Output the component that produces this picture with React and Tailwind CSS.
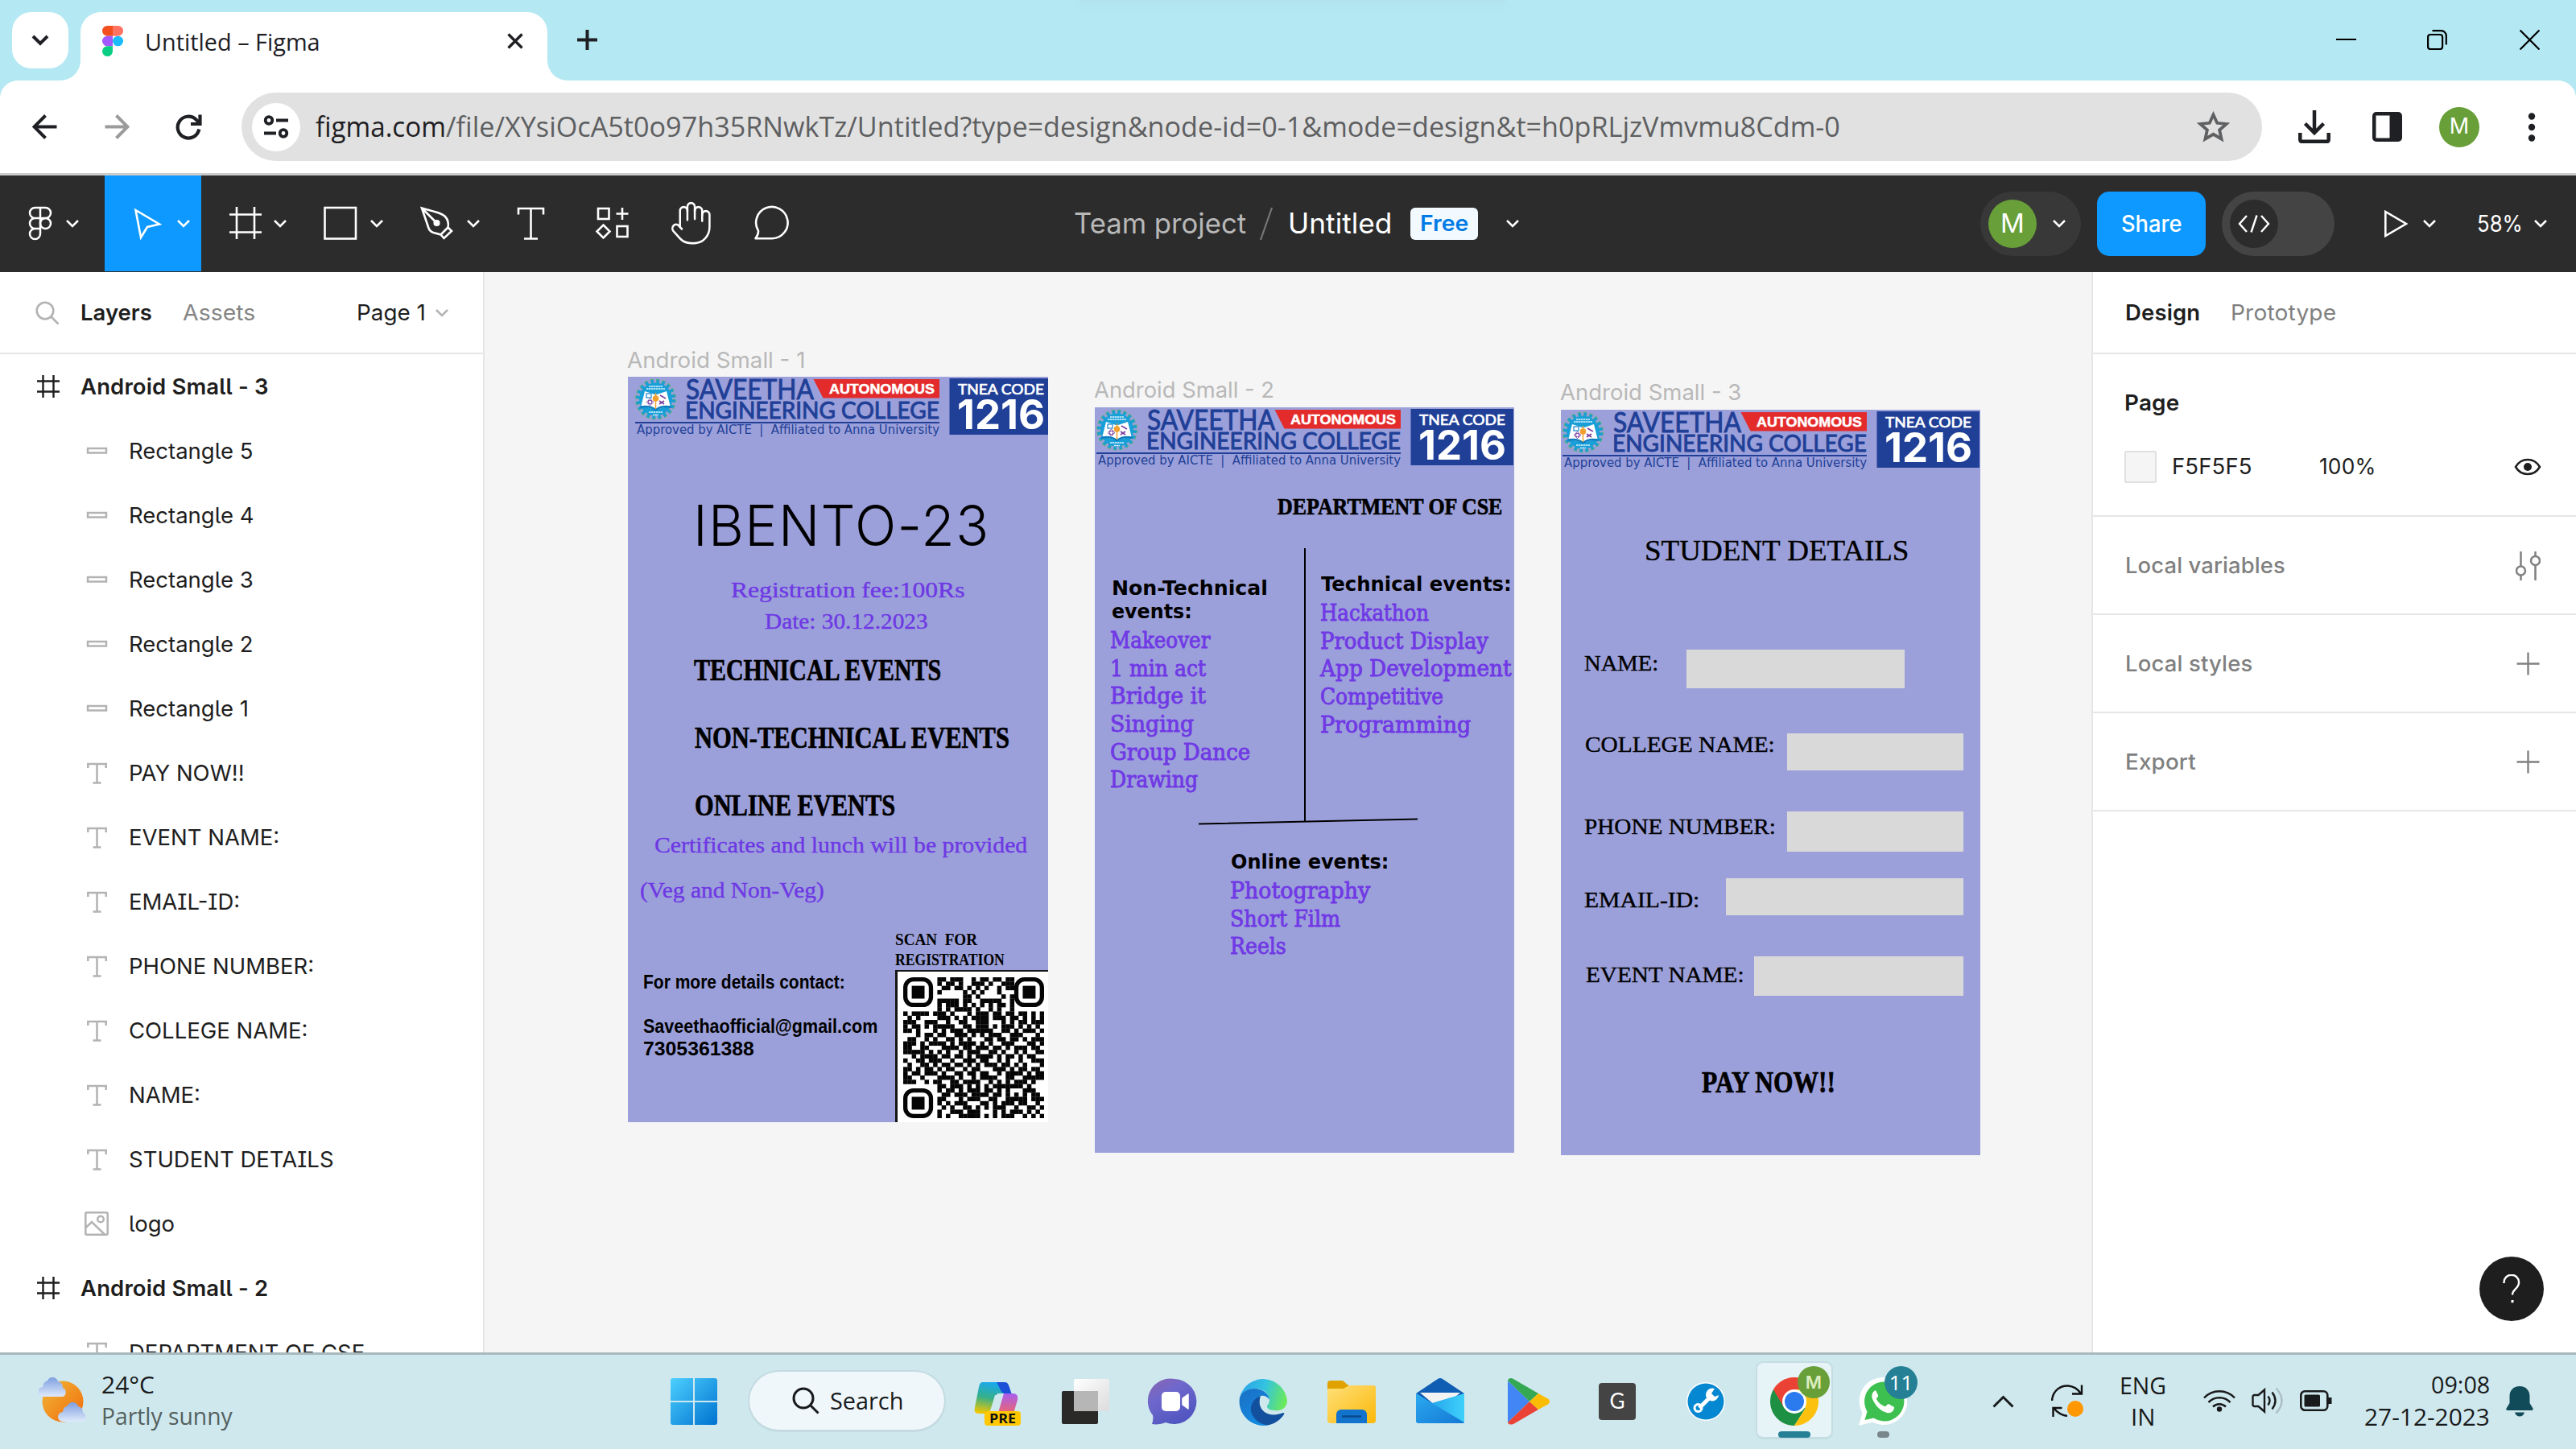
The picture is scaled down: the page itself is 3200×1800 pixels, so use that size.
import React, { useLayoutEffect, useRef, useState } from "react";
import { Hand } from "lucide-react";

const UI = "font-['Open_Sans',sans-serif]";
const INTER = "font-['Inter',sans-serif]";
const SERIF = "font-['Liberation_Serif',serif]";

/* Text stretched to the width of its box */
function Fit({ className = "", children }) {
  const outer = useRef(null);
  const inner = useRef(null);
  const [scale, setScale] = useState(1);
  useLayoutEffect(() => {
    const run = () => {
      const w = inner.current.offsetWidth;
      if (w) setScale(outer.current.clientWidth / w);
    };
    run();
    document.fonts?.ready.then(run);
  }, []);
  return (
    <span ref={outer} className={`block shrink-0 leading-none ${className}`}>
      <span ref={inner} className="inline-block origin-left whitespace-pre" style={{ transform: `scaleX(${scale})` }}>
        {children}
      </span>
    </span>
  );
}

function Chevron({ className = "" }) {
  return (
    <svg className={`h-[10px] w-[16px] shrink-0 ${className}`} viewBox="0 0 16 10" fill="none" stroke="currentColor" strokeWidth="2.5">
      <path d="M1 1l7 7 7-7" />
    </svg>
  );
}

/* ---------- browser ---------- */

function TabStrip() {
  return (
    <div className="flex h-[100px] shrink-0 items-start bg-[#b4e8f2]">
      <div className="ml-[15px] mt-[15px] flex size-[70px] shrink-0 items-center justify-center rounded-[24px] bg-white">
        <svg className="h-[14px] w-[22px]" viewBox="0 0 22 14" fill="none" stroke="#1f2024" strokeWidth="4">
          <path d="M2 2l9 9 9-9" />
        </svg>
      </div>
      <svg className="-ml-[10px] h-[25px] w-[25px] self-end" viewBox="0 0 25 25">
        <path d="M25 0v25H0A25 25 0 0 0 25 0z" fill="#fff" />
      </svg>
      <div className="mt-[15px] flex h-[85px] w-[580px] items-start rounded-t-[25px] bg-white">
        <svg className="ml-[27px] mt-[17px] h-[38px] w-[26px]" viewBox="0 0 38 57" preserveAspectRatio="none">
          <path d="M0 9.5A9.5 9.5 0 0 1 9.5 0H19v19H9.5A9.5 9.5 0 0 1 0 9.5z" fill="#f24e1e" />
          <path d="M19 0v19h9.5a9.5 9.5 0 1 0 0-19H19z" fill="#ff7262" />
          <path d="M0 28.5A9.5 9.5 0 0 1 9.5 19H19v19H9.5A9.5 9.5 0 0 1 0 28.5z" fill="#a259ff" />
          <circle cx="28.5" cy="28.5" r="9.5" fill="#1abcfe" />
          <path d="M0 47.5A9.5 9.5 0 0 1 9.5 38H19v9.5a9.5 9.5 0 1 1-19 0z" fill="#0acf83" />
        </svg>
        <Fit className={`ml-[27px] mt-[22px] w-[218px] text-[29.5px] text-[#1f2024] ${UI}`}>Untitled – Figma</Fit>
        <svg className="ml-[232px] mt-[26px] size-[20px]" viewBox="0 0 20 20" stroke="#1f2024" strokeWidth="3.4">
          <path d="M1.5 1.5l17 17M18.5 1.5l-17 17" />
        </svg>
      </div>
      <svg className="h-[25px] w-[25px] self-end" viewBox="0 0 25 25">
        <path d="M0 0v25h25A25 25 0 0 1 0 0z" fill="#fff" />
      </svg>
      <svg className="ml-[12px] mt-[37px] size-[25px]" viewBox="0 0 25 25" stroke="#1f2024" strokeWidth="4">
        <path d="M12.5 0v25M0 12.5h25" />
      </svg>
      <div className="ml-[598px] h-[4px] w-[530px] rounded-b-[8px] bg-[#b1e2ed] shadow-[0_2px_12px_#b0e0eb]" />
      <div className="ml-auto mr-[45px] mt-[37px] flex text-black">
        <svg className="h-[25px] w-[25px]" viewBox="0 0 25 25" stroke="currentColor" strokeWidth="2">
          <path d="M0 12h25" />
        </svg>
        <svg className="ml-[88px] size-[25px]" viewBox="0 0 25 25" fill="none" stroke="currentColor" strokeWidth="2.2">
          <rect x="1.1" y="6" width="18" height="18" rx="3" />
          <path d="M6.500 1.200h11a6.300 6.300 0 0 1 6.300 6.300V18.500" />
        </svg>
        <svg className="ml-[90px] size-[25px]" viewBox="0 0 25 25" stroke="currentColor" strokeWidth="2.2">
          <path d="M0.500 0.500l24 24M24.500 0.500l-24 24" />
        </svg>
      </div>
    </div>
  );
}

function AddressBar() {
  return (
    <div className="h-[115px] shrink-0 bg-[#b4e8f2]">
      <div className="flex h-[115px] items-center rounded-t-[22px] bg-white">
        <svg className="ml-[40px] size-[31px]" viewBox="0 0 31 31" fill="none" stroke="#1f2024" strokeWidth="4">
          <path d="M30.500 15.500H3M16.500 1.500l-14 14 14 14" />
        </svg>
        <svg className="ml-[59px] size-[31px]" viewBox="0 0 31 31" fill="none" stroke="#9b9b9c" strokeWidth="4">
          <path d="M0.500 15.500H28M14.500 1.500l14 14-14 14" />
        </svg>
        <svg className="ml-[56px] h-[32px] w-[34px]" viewBox="0 0 34 32" fill="none" stroke="#1f2024" strokeWidth="4.200">
          <path d="M30.300 18.500A13.400 13.400 0 1 1 26.500 6.500l4 4" />
          <path d="M20 12h11.500V0.500" />
        </svg>
        <div className="ml-[49px] flex h-[85px] w-[2510px] items-center rounded-full bg-[#e1e1e1]">
          <div className="ml-[13px] flex size-[60px] items-center justify-center rounded-full bg-white">
            <svg className="h-[30px] w-[32px]" viewBox="0 0 32 30" fill="none" stroke="#1f2024" strokeWidth="3.800">
              <circle cx="7" cy="6.500" r="4.300" />
              <path d="M16 6.500h15M1 22.500h15" />
              <circle cx="25" cy="22.500" r="4.300" />
            </svg>
          </div>
          <Fit className={`-mt-[2px] ml-[19px] w-[162px] text-[35px] text-[#1f2024] ${UI}`}>figma.com</Fit>
          <Fit className={`-mt-[2px] w-[1732px] text-[35px] text-[#5e5f61] ${UI}`}>
            /file/XYsiOcA5t0o97h35RNwkTz/Untitled?type=design&amp;node-id=0-1&amp;mode=design&amp;t=h0pRLjzVmvmu8Cdm-0
          </Fit>
          <svg className="ml-auto mr-[40px] h-[39px] w-[41px]" viewBox="0 0 41 39" fill="none" stroke="#5e6062" strokeWidth="3.800">
            <path d="M20.500 4.500l4.700 10.300 11.500 1.100-8.600 7.600 2.500 11.200-10.100-5.900-10.100 5.900 2.500-11.200-8.600-7.600 11.500-1.100z" />
          </svg>
        </div>
        <svg className="ml-[45px] h-[41px] w-[40px]" viewBox="0 0 40 41" fill="none" stroke="#1f2024" strokeWidth="4.500">
          <path d="M20 0v27M8.500 16.500L20 28l11.500-11.500M2.300 28v8.500a2.500 2.500 0 0 0 2.500 2.300h30.400a2.500 2.500 0 0 0 2.500-2.300V28" />
        </svg>
        <svg className="ml-[52px] h-[37px] w-[37px]" viewBox="0 0 37 37">
          <rect width="37" height="37" rx="5" fill="#1f2024" />
          <rect x="4.500" y="4.500" width="17" height="28" fill="#fff" />
        </svg>
        <div className={`ml-[46px] flex size-[50px] items-center justify-center rounded-full bg-[#689f38] text-[27px] text-white ${INTER}`}>M</div>
        <svg className="ml-[60px] h-[36px] w-[10px]" viewBox="0 0 10 36" fill="#1f2024">
          <circle cx="5" cy="4.500" r="4.200" />
          <circle cx="5" cy="18" r="4.200" />
          <circle cx="5" cy="31.500" r="4.200" />
        </svg>
      </div>
    </div>
  );
}

/* ---------- Figma toolbar ---------- */

function Tool({ wide, children }) {
  return (
    <svg
      className={wide ? "h-[120px] w-[120px] shrink-0" : "h-[120px] w-[100px] shrink-0"}
      viewBox={wide ? "0 0 120 120" : "0 0 100 120"}
      fill="none"
      stroke="#fff"
      strokeWidth="2.6"
    >
      {children}
      {wide && <path d="M91 56l7 7 7-7" />}
    </svg>
  );
}

function FigmaToolbar() {
  return (
    <div className={`flex h-[120px] shrink-0 items-center bg-[#2c2c2c] text-white ${INTER}`}>
      <div className="flex w-[1334px] shrink-0">
        <svg className="h-[120px] w-[130px] shrink-0" viewBox="0 0 130 120" fill="none" stroke="#fff" strokeWidth="2.500">
          <path d="M50 40h-6.500a6.500 6.500 0 0 0 0 13H50zM50 40h6.500a6.500 6.500 0 0 1 0 13H50zM50 53h-6.500a6.500 6.500 0 0 0 0 13H50zM50 66h-6.500a6.500 6.500 0 1 0 6.500 6.500z" />
          <circle cx="56.500" cy="59.500" r="6.500" />
          <path d="M83 56l7 7 7-7" />
        </svg>
        <div className="h-[119px] bg-[#0d99ff]">
          <Tool wide>
            <path d="M38.500 43l29.500 17.500-15 3.500-8 13z" />
          </Tool>
        </div>
        <Tool wide>
          <path d="M44 39v40M66 39v40M35 48.500h40M35 70.500h40" />
        </Tool>
        <Tool wide>
          <rect x="33.500" y="40" width="38.500" height="38.500" />
        </Tool>
        <Tool wide>
          <path d="M34 40.500l8.500 25c1 3 3 4.500 6 5.500l9 2.500 4 4.500 9.500-9-4.500-4.500c1-5 0-10-4-14-4-3.500-10-5-28.500-10zM57.500 73.500l9-9M34 40.500l17 17" />
          <circle cx="52.500" cy="59" r="2.800" fill="#fff" />
        </Tool>
        <Tool>
          <path d="M34 48.500V41h31v7.500M49.500 41v37.500M41 78.500h17" />
        </Tool>
        <Tool>
          <rect x="33" y="41" width="13.500" height="13" />
          <path d="M63 40v15M55.500 47.500h15M39.500 61.500l8 8-8 8-8-8z" />
          <rect x="56.500" y="63" width="13" height="13" />
        </Tool>
        <div className="flex h-[120px] w-[100px] items-center justify-center">
          <Hand className="-ml-[3px] -mt-[3px] h-[60px] w-[55px]" preserveAspectRatio="none" strokeWidth={1.1} />
        </div>
        <Tool>
          <path d="M27 78.300c2.500-3.300 3.700-6.500 3.500-9.500A19.700 19.700 0 1 1 48 78.300z" strokeLinejoin="round" transform="translate(1.500 0)" />
        </Tool>
      </div>
      <div className="-mt-[1px] flex items-center">
        <Fit className="w-[214px] text-[35px] text-[#b8b8b8]">Team project</Fit>
        <svg className="ml-[17px] h-[42px] w-[16px]" viewBox="0 0 16 42" stroke="#767676" strokeWidth="2.200">
          <path d="M15 1L1 41" />
        </svg>
        <Fit className="ml-[19px] w-[129px] text-[35px]">Untitled</Fit>
        <div className="ml-[23px] flex h-[40px] w-[84px] items-center justify-center rounded-[6px] bg-[#f2f9ff] text-[#007be5]">
          <Fit className="w-[60px] text-[27.500px] font-semibold">Free</Fit>
        </div>
        <Chevron className="ml-[35px]" />
      </div>
      <div className="flex flex-1 items-center justify-end">
        <div className="flex h-[80px] w-[125px] items-center rounded-full bg-[#383838]">
          <div className="ml-[10px] flex size-[60px] items-center justify-center rounded-full bg-[#689f38] text-[33px]">M</div>
          <Chevron className="ml-[20px]" />
        </div>
        <div className="ml-[20px] flex h-[80px] w-[135px] items-center justify-center rounded-[15px] bg-[#0d99ff]">
          <Fit className="w-[76px] text-[28px] font-medium">Share</Fit>
        </div>
        <div className="ml-[20px] flex h-[80px] w-[140px] items-center rounded-full bg-[#444]">
          <div className="ml-[10px] flex size-[60px] items-center justify-center rounded-full bg-[#2c2c2c]">
            <svg className="h-[22px] w-[40px]" viewBox="0 0 40 22" fill="none" stroke="#fff" strokeWidth="2.400">
              <path d="M11 1L2 11l9 10M29 1l9 10-9 10M23.500 0.500l-7 21" />
            </svg>
          </div>
        </div>
        <svg className="ml-[61px] h-[36px] w-[31px]" viewBox="0 0 31 36" fill="none" stroke="#fff" strokeWidth="2.600">
          <path d="M2.300 3v30L28 18z" />
        </svg>
        <Chevron className="ml-[18px]" />
        <Fit className="ml-[51px] w-[57px] text-[28px]">58%</Fit>
        <Chevron className="ml-[14px] mr-[36px]" />
      </div>
    </div>
  );
}

/* ---------- left panel ---------- */

const layers = [
  ["frame", "Android Small - 3"],
  ["rect", "Rectangle 5"],
  ["rect", "Rectangle 4"],
  ["rect", "Rectangle 3"],
  ["rect", "Rectangle 2"],
  ["rect", "Rectangle 1"],
  ["text", "PAY NOW!!"],
  ["text", "EVENT NAME:"],
  ["text", "EMAIL-ID:"],
  ["text", "PHONE NUMBER:"],
  ["text", "COLLEGE NAME:"],
  ["text", "NAME:"],
  ["text", "STUDENT DETAILS"],
  ["image", "logo"],
  ["frame", "Android Small - 2"],
  ["text", "DEPARTMENT OF CSE"],
];

function LayerIcon({ kind }) {
  if (kind === "frame")
    return (
      <svg className="h-[28px] w-[28px]" viewBox="0 0 28 28" stroke="#1e1e1e" strokeWidth="2.400">
        <path d="M7.500 0v28M20.500 0v28M0 7.500h28M0 20.500h28" />
      </svg>
    );
  return (
    <svg className="h-[30px] w-[30px]" viewBox="0 0 30 30" fill="none" stroke="#b3b3b3" strokeWidth="2.500">
      {kind === "rect" && <rect x="4" y="12" width="23" height="5.500" />}
      {kind === "text" && <path d="M4.300 9V4h22.400v5M15.500 4v23M10.500 27.500h10" />}
      {kind === "image" && (
        <>
          <rect x="1.300" y="1.300" width="27.400" height="27.400" rx="1.500" />
          <path d="M1.500 20l7.500-7 16 15.500" />
          <circle cx="20" cy="9.500" r="3.800" />
        </>
      )}
    </svg>
  );
}

function LayersPanel() {
  return (
    <div className={`flex w-[602px] shrink-0 flex-col overflow-hidden border-r-2 border-[#e6e6e6] bg-white text-[27.500px] text-[#1e1e1e] ${INTER}`}>
      <div className="flex h-[102px] shrink-0 items-center border-b-2 border-[#e6e6e6] pt-[1px]">
        <svg className="ml-[44px] size-[30px]" viewBox="0 0 30 30" fill="none" stroke="#b3b3b3" strokeWidth="2.600">
          <circle cx="12" cy="12" r="10.300" />
          <path d="M19.500 19.500l9 9" />
        </svg>
        <Fit className="ml-[26px] w-[89px] font-semibold">Layers</Fit>
        <Fit className="ml-[38px] w-[90px] text-[#858585]">Assets</Fit>
        <Fit className="ml-[126px] w-[86px]">Page 1</Fit>
        <Chevron className="ml-[12px] text-[#b3b3b3]" />
      </div>
      <div className="flex flex-col [font-feature-settings:'cv05','cv08']">
        {layers.map(([kind, name]) =>
          kind === "frame" ? (
            <div key={name} className="flex h-[80px] shrink-0 items-center gap-[26px] pl-[46px] font-semibold tracking-[0.005em]">
              <LayerIcon kind={kind} />
              <span className="pt-[1px]">{name}</span>
            </div>
          ) : (
            <div key={name} className="flex h-[80px] shrink-0 items-center gap-[25px] pl-[105px]">
              <LayerIcon kind={kind} />
              <span className="pt-[1px]">{name}</span>
            </div>
          )
        )}
      </div>
    </div>
  );
}

/* ---------- canvas artwork ---------- */

function Gear() {
  return (
    <g>
      <circle cx="25.500" cy="26" r="22.500" fill="none" stroke="#5fb07a" strokeWidth="6" strokeDasharray="4.100 2.960" />
      <circle cx="25.500" cy="26" r="22" fill="none" stroke="#189fd8" strokeWidth="5" strokeDasharray="3.200 3.710" strokeDashoffset="-0.500" />
      <circle cx="25.500" cy="26" r="20.500" fill="#189fd8" />
      <path d="M12 16l13.500 4.500L39 16l4.500 18-18 5-18-5z" fill="#fff" />
      <path d="M6 36c7-2 14-1 19.500 3 5.500-4 12.500-5 19.500-3" fill="none" stroke="#0f7fc0" strokeWidth="2.500" />
      <path d="M25.500 18v20" stroke="#f1a02d" strokeWidth="1.500" />
      <circle cx="25.500" cy="25" r="3.800" fill="#f1a02d" />
      <rect x="14" y="19" width="6" height="5" fill="none" stroke="#2b8fd0" strokeWidth="1.300" />
      <ellipse cx="18.500" cy="29.500" rx="4" ry="2" fill="none" stroke="#7a3fa0" />
      <ellipse cx="18.500" cy="29.500" rx="2" ry="4" fill="none" stroke="#7a3fa0" />
      <path d="M31 21l7 4M30 32l6-4M30 28l6 4" stroke="#7a3fa0" strokeWidth="1.600" />
      <path d="M17 10h17M14 13h23M17 42h17M22 45.500h7" stroke="#dff3fc" strokeWidth="1.500" strokeDasharray="2.500 0.500" />
    </g>
  );
}

function CollegeLogo({ className }) {
  const fit = { lengthAdjust: "spacingAndGlyphs" };
  return (
    <svg className={`absolute h-[74px] w-[520px] ${className}`} viewBox="0 0 520 74" fill="#203f97">
      <Gear />
      <g fontFamily="Lato, sans-serif" fontWeight="400" stroke="#203f97" strokeWidth="0.900">
        <text x="63" y="26" fontSize="34" textLength="159" {...fit}>SAVEETHA</text>
        <text x="62" y="50" fontSize="28" textLength="316" {...fit}>ENGINEERING COLLEGE</text>
      </g>
      <path d="M221.500 1H378v23.500H233.500z" fill="#e32b2b" />
      <text x="241" y="19" fontSize="17" fontFamily="Liberation Sans, sans-serif" fontWeight="700" fill="#fff" stroke="#fff" strokeWidth="0.500" textLength="131" {...fit}>AUTONOMOUS</text>
      <path d="M0 54h378v2H0z" />
      <text x="2" y="69" fontSize="15" fontFamily="DejaVu Sans, sans-serif" textLength="376" {...fit}>
        Approved by AICTE{"\u00a0"} | {"\u00a0"}Affiliated to Anna University
      </text>
      <path d="M390.500 0H518v70H390.500z" />
      <g fill="#fff">
        <text x="401" y="20" fontSize="18" fontFamily="Lato, sans-serif" fontWeight="400" stroke="#fff" strokeWidth="0.700" textLength="107" {...fit}>TNEA CODE</text>
        <text x="400" y="62.500" fontSize="51" fontFamily="Inter, sans-serif" fontWeight="700" textLength="109" {...fit}>1216</text>
      </g>
    </svg>
  );
}

const qrRows = [
  "000000001101110010110110110000000",
  "000000001011010011101001110000000",
  "000000000110110101010010110000000",
  "000000001000001010100010000000000",
  "000000000000001101000001010000000",
  "000000001111101100111110010000000",
  "000000001011101010101011010000000",
  "000000001010111101001010010000000",
  "101111011101000101110110110110101",
  "010100001110101011110111011010101",
  "111001110010011001110001010110111",
  "101101011111001101110101110101010",
  "110100010101110111111001101011101",
  "000101101100111010101110011100010",
  "011001010011010100011011011010111",
  "111010111101011110101001110001101",
  "110011000111101101110110101110110",
  "111110101010010111001101001010011",
  "001011110110110101111010110101100",
  "100110111001001110110010100100111",
  "010011010110110101011101101010001",
  "110101101011001011000111010110110",
  "101101110100110110110010111101011",
  "110010001111010010111100110011111",
  "111001011001101111001010101110100",
  "000000001101110101010111111101000",
  "000000001011010111011010100011100",
  "000000000110111011110110101010110",
  "000000001100010111001100111110111",
  "000000001010111000110101110110010",
  "000000000101001101010111001001101",
  "000000001001110111000101011101010",
  "000000001010011111010101110010101",
];

function QrCode() {
  const finder = (x, y) => (
    <g key={`${x}-${y}`}>
      <rect x={x + 0.5} y={y + 0.5} width="6" height="6" rx="1.900" fill="none" stroke="#050505" strokeWidth="1" />
      <rect x={x + 2} y={y + 2} width="3" height="3" fill="#050505" />
    </g>
  );
  return (
    <div className="absolute left-[332px] top-[737px] h-[190px] w-[190px] border-l-[3px] border-t-2 border-[#151515] bg-white">
      <svg className="ml-[7px] mt-[7px] size-[175px]" viewBox="0 0 33 33">
        {qrRows.map((row, y) =>
          [...row].map((c, x) => (c === "1" ? <rect key={`${x}-${y}`} x={x} y={y} width="1.040" height="1.040" fill="#050505" /> : null))
        )}
        {finder(0, 0)}
        {finder(26, 0)}
        {finder(0, 26)}
      </svg>
    </div>
  );
}

function Frame({ className, children }) {
  return <div className={`absolute h-[926px] overflow-hidden bg-[#9ca0da] text-black ${className}`}>{children}</div>;
}

function EventList({ className, items }) {
  return (
    <div className={`absolute flex flex-col font-['DejaVu_Serif',serif] text-[27px] text-[#7039e5] [-webkit-text-stroke:0.9px_#7039e5] ${className}`}>
      {items.map(([label, width]) => (
        <div key={label} className="flex h-[34.700px] items-center">
          <Fit className={width}>{label}</Fit>
        </div>
      ))}
    </div>
  );
}

function Canvas() {
  const label = `absolute text-[27.500px] text-[#b8b8b8] ${INTER}`;
  const purple = `absolute text-[28px] text-[#6e38e4] [-webkit-text-stroke:0.4px_#6e38e4] ${SERIF}`;
  const head = `absolute text-[37px] font-bold [-webkit-text-stroke:0.7px_#000] ${SERIF}`;
  const contact = "absolute font-['Liberation_Sans',sans-serif] text-[23px] font-bold";
  const marker = "absolute font-['DejaVu_Sans',sans-serif] text-[24px] font-bold";
  const field = `absolute text-[28px] [-webkit-text-stroke:0.4px_#000] ${SERIF}`;
  const box = "absolute bg-[#d9d9d9]";
  return (
    <div className="relative min-w-0 flex-1 overflow-hidden bg-[#f5f5f5]">
      <Fit className={`left-[177px] top-[96px] w-[221px] ${label}`}>Android Small - 1</Fit>
      <Frame className="left-[178px] top-[130px] w-[522px]">
        <CollegeLogo className="left-[9px] top-[2px]" />
        <Fit className={`absolute left-[81px] top-[150px] w-[368px] text-[70px] font-light tracking-[0.020em] ${INTER}`}>IBENTO-23</Fit>
        <Fit className={`left-[128px] top-[251px] w-[290px] ${purple}`}>Registration fee:100Rs</Fit>
        <Fit className={`left-[170px] top-[290px] w-[203px] ${purple}`}>Date: 30.12.2023</Fit>
        <Fit className={`left-[82px] top-[346px] w-[307px] ${head}`}>TECHNICAL EVENTS</Fit>
        <Fit className={`left-[83px] top-[430px] w-[391px] ${head}`}>NON-TECHNICAL EVENTS</Fit>
        <Fit className={`left-[83px] top-[514px] w-[249px] ${head}`}>ONLINE EVENTS</Fit>
        <Fit className={`left-[33px] top-[568px] w-[463px] ${purple}`}>Certificates and lunch will be provided</Fit>
        <Fit className={`left-[15px] top-[624px] w-[229px] ${purple}`}>(Veg and Non-Veg)</Fit>
        <Fit className={`absolute left-[332px] top-[689px] w-[102px] text-[21px] font-bold ${SERIF}`}>{"SCAN  FOR"}</Fit>
        <Fit className={`absolute left-[332px] top-[714px] w-[136px] text-[21px] font-bold ${SERIF}`}>REGISTRATION</Fit>
        <Fit className={`left-[19px] top-[741px] w-[251px] ${contact}`}>For more details contact:</Fit>
        <Fit className={`left-[19px] top-[796px] w-[291px] ${contact}`}>Saveethaofficial@gmail.com</Fit>
        <Fit className={`left-[19px] top-[824px] w-[138px] ${contact}`}>7305361388</Fit>
        <QrCode />
      </Frame>

      <Fit className={`left-[757px] top-[133px] w-[224px] ${label}`}>Android Small - 2</Fit>
      <Frame className="left-[758px] top-[168px] w-[521px]">
        <CollegeLogo className="left-[2px] top-[2px]" />
        <Fit className={`absolute left-[227px] top-[108px] w-[279px] text-[30px] font-bold [-webkit-text-stroke:0.7px_#000] ${SERIF}`}>DEPARTMENT OF CSE</Fit>
        <svg className="absolute left-[129px] top-[175px] h-[344px] w-[273px]" viewBox="0 0 273 344" stroke="#000" strokeWidth="2">
          <path d="M132 0v339M0 342.500l272-6" />
        </svg>
        <Fit className={`left-[21px] top-[213px] w-[194px] ${marker}`}>Non-Technical</Fit>
        <Fit className={`left-[21px] top-[242px] w-[100px] ${marker}`}>events:</Fit>
        <EventList
          className="left-[19px] top-[272px]"
          items={[["Makeover", "w-[124px]"], ["1 min act", "w-[119px]"], ["Bridge it", "w-[119px]"], ["Singing", "w-[104px]"], ["Group Dance", "w-[174px]"], ["Drawing", "w-[109px]"]]}
        />
        <Fit className={`left-[281px] top-[208px] w-[237px] ${marker}`}>Technical events:</Fit>
        <EventList
          className="left-[280px] top-[238px]"
          items={[["Hackathon", "w-[135px]"], ["Product Display", "w-[209px]"], ["App Development", "w-[238px]"], ["Competitive", "w-[153px]"], ["Programming", "w-[187px]"]]}
        />
        <Fit className={`left-[169px] top-[553px] w-[196px] ${marker}`}>Online events:</Fit>
        <EventList className="left-[168px] top-[583px]" items={[["Photography", "w-[174px]"], ["Short Film", "w-[137px]"], ["Reels", "w-[70px]"]]} />
      </Frame>

      <Fit className={`left-[1336px] top-[136px] w-[225px] ${label}`}>Android Small - 3</Fit>
      <Frame className="left-[1337px] top-[171px] w-[521px]">
        <CollegeLogo className="left-[2px] top-[2px]" />
        <Fit className={`absolute left-[104px] top-[157px] w-[328px] text-[36px] [-webkit-text-stroke:0.4px_#000] ${SERIF}`}>STUDENT DETAILS</Fit>
        <Fit className={`left-[29px] top-[301px] w-[92px] ${field}`}>NAME:</Fit>
        <div className={`left-[156px] top-[298px] h-[48px] w-[271px] ${box}`} />
        <Fit className={`left-[30px] top-[402px] w-[236px] ${field}`}>COLLEGE NAME:</Fit>
        <div className={`left-[281px] top-[402px] h-[46px] w-[219px] ${box}`} />
        <Fit className={`left-[29px] top-[504px] w-[238px] ${field}`}>PHONE NUMBER:</Fit>
        <div className={`left-[281px] top-[499px] h-[50px] w-[219px] ${box}`} />
        <Fit className={`left-[29px] top-[595px] w-[143px] ${field}`}>EMAIL-ID:</Fit>
        <div className={`left-[205px] top-[582px] h-[46px] w-[295px] ${box}`} />
        <Fit className={`left-[31px] top-[688px] w-[196px] ${field}`}>EVENT NAME:</Fit>
        <div className={`left-[240px] top-[679px] h-[49px] w-[260px] ${box}`} />
        <Fit className={`left-[175px] top-[817px] w-[166px] ${head}`}>PAY NOW!!</Fit>
      </Frame>
    </div>
  );
}

/* ---------- right panel ---------- */

function Plus() {
  return (
    <svg className="ml-auto mr-[45px] size-[29px]" viewBox="0 0 29 29" stroke="#808080" strokeWidth="2.400">
      <path d="M14.500 0.500v28M0.500 14.500h28" />
    </svg>
  );
}

function DesignPanel() {
  const row = "flex h-[122px] items-center border-b-2 border-[#e6e6e6] pl-[40px] pt-[1px] font-medium text-[#808080]";
  return (
    <div className={`flex w-[602px] shrink-0 flex-col border-l-2 border-[#e6e6e6] bg-white text-[27.500px] tracking-[0.005em] text-[#1e1e1e] ${INTER}`}>
      <div className="flex h-[102px] items-center border-b-2 border-[#e6e6e6] pl-[40px] pt-[2px]">
        <Fit className="w-[93px] font-semibold">Design</Fit>
        <Fit className="ml-[38px] w-[131px] text-[#808080]">Prototype</Fit>
      </div>
      <div className="flex h-[202px] flex-col border-b-2 border-[#e6e6e6] pl-[39px] pt-[47px]">
        <Fit className="w-[68px] font-semibold">Page</Fit>
        <div className="mt-[45px] flex h-[40px] items-center">
          <div className="size-[40px] rounded-[2px] border-2 border-[#e0e0e0] bg-[#f5f5f5]" />
          <Fit className="ml-[19px] w-[100px] pt-[1px]">F5F5F5</Fit>
          <Fit className="ml-[83px] w-[70px] pt-[1px]">100%</Fit>
          <svg className="ml-auto mr-[43px] h-[22px] w-[34px]" viewBox="0 0 34 22" fill="none" stroke="#1e1e1e" strokeWidth="2.500">
            <path d="M2 11C9-1 25-1 32 11 25 23 9 23 2 11z" />
            <circle cx="17" cy="11" r="5" fill="#1e1e1e" stroke="none" />
          </svg>
        </div>
      </div>
      <div className={row}>
        <Fit className="w-[199px]">Local variables</Fit>
        <svg className="ml-auto mr-[44px] h-[36px] w-[31px]" viewBox="0 0 31 36" fill="none" stroke="#808080" strokeWidth="2.500">
          <path d="M6.500 0v18M6.500 30v6M24.500 0v6M24.500 17v19" />
          <circle cx="6.500" cy="24" r="5.500" />
          <circle cx="24.500" cy="11.500" r="5.500" />
        </svg>
      </div>
      <div className={row}>
        <Fit className="w-[158px]">Local styles</Fit>
        <Plus />
      </div>
      <div className={row}>
        <Fit className="w-[88px]">Export</Fit>
        <Plus />
      </div>
      <div className="mb-[39px] ml-auto mr-[40px] mt-auto flex size-[80px] items-center justify-center rounded-full bg-[#1e1e1e]">
        <svg className="h-[36px] w-[22px]" viewBox="0 0 22 36" fill="none" stroke="#fff" strokeWidth="2.400">
          <path d="M1.500 11V10a9.300 9.300 0 0 1 18.600 0c0 4-2 6-4.500 8.500S12 22 12 25.500" />
          <path d="M12 32v3.200" strokeWidth="3" />
        </svg>
      </div>
    </div>
  );
}

/* ---------- taskbar ---------- */

function WeatherIcon() {
  const cloud = "M5 25a5 5 0 0 1 0-12 9 9 0 0 1 6-8 7 7 0 0 1 13 1 8 8 0 0 1 6 8c5 1 5 10 0 11z";
  return (
    <svg className="-mt-[6px] ml-[48px] h-[58px] w-[61px]" viewBox="0 0 61 58">
      <defs>
        <linearGradient id="sun" x1="0" y1="0" x2="1" y2="1">
          <stop offset="0" stopColor="#f0b838" />
          <stop offset="1" stopColor="#f26a0c" />
        </linearGradient>
        <linearGradient id="cloud" x1="0" y1="0" x2="0" y2="1">
          <stop offset="0" stopColor="#7d9fe0" />
          <stop offset="1" stopColor="#dfe9fb" />
        </linearGradient>
      </defs>
      <circle cx="30" cy="31" r="25.500" fill="url(#sun)" />
      <path d={cloud} fill="url(#cloud)" />
      <path d={cloud} transform="translate(25 31)" fill="url(#cloud)" />
    </svg>
  );
}

function Slot({ children, className = "" }) {
  return (
    <div className={`relative flex h-full w-[110px] shrink-0 items-center justify-center ${className}`}>
      <svg className="h-[60px] w-[60px] overflow-visible" viewBox="0 0 60 60">{children}</svg>
    </div>
  );
}

function Apps() {
  return (
    <>
      <svg width="0" height="0" className="absolute">
        <defs>
          <linearGradient id="cpA" x1="0.500" y1="0" x2="0.300" y2="1"><stop offset="0" stopColor="#18a8f0" /><stop offset="0.500" stopColor="#35b08a" /><stop offset="1" stopColor="#f2c600" /></linearGradient>
          <linearGradient id="cpB" x1="0.500" y1="0" x2="0.500" y2="1"><stop offset="0" stopColor="#a75cf0" /><stop offset="1" stopColor="#ff6a4d" /></linearGradient>
          <linearGradient id="tvA" x1="0" y1="0" x2="1" y2="1"><stop offset="0" stopColor="#fff" /><stop offset="1" stopColor="#dcdcdc" /></linearGradient>
          <linearGradient id="chat" x1="0" y1="0" x2="0.600" y2="1"><stop offset="0" stopColor="#8a63b0" /><stop offset="0.400" stopColor="#6f68cc" /><stop offset="1" stopColor="#5055c0" /></linearGradient>
          <linearGradient id="edA" x1="0" y1="0.300" x2="1" y2="0.500"><stop offset="0" stopColor="#28a4ea" /><stop offset="0.500" stopColor="#33c3e0" /><stop offset="1" stopColor="#6bea5a" /></linearGradient>
          <linearGradient id="edB" x1="0" y1="0" x2="0.600" y2="1"><stop offset="0" stopColor="#1b6fc4" /><stop offset="1" stopColor="#128ae0" /></linearGradient>
          <linearGradient id="fold" x1="0" y1="0" x2="1" y2="1"><stop offset="0" stopColor="#ffe07a" /><stop offset="1" stopColor="#fbb808" /></linearGradient>
          <linearGradient id="mailA" x1="0" y1="0" x2="1" y2="0"><stop offset="0" stopColor="#1c94e6" /><stop offset="1" stopColor="#3ed0fb" /></linearGradient>
          <linearGradient id="mailB" x1="0" y1="0" x2="1" y2="1"><stop offset="0" stopColor="#2baaf0" /><stop offset="1" stopColor="#1478d4" /></linearGradient>
        </defs>
      </svg>
      <Slot>
        <path d="M12 6h25c5 0 6 3 7.500 8l3 8H30l-3 0-6 20c-.8 2-2 3-4 3H7c-5 0-6-3-5-8L7 12c1-4 2-6 5-6z" fill="url(#cpA)" />
        <path d="M34 6h5c4 0 5 3 6.500 8l2 6H38c-4-1-5-8-9-14z" fill="#1b4fd8" />
        <path d="M36 20h13c5 0 7 3 6 8l-5 17c-1 4-3 6-6 6H21c-4 0-5-2-6-5h4c3 0 5-1 6-4l6-18c1-3 2-4 5-4z" fill="url(#cpB)" />
        <path d="M30 20h8l-7 24H20z" fill="#cfe8ee" />
        <rect x="14" y="42" width="45" height="18" rx="4" fill="#ffc800" />
        <text x="20" y="57" fontSize="16" fontWeight="700" fontFamily="Open Sans, sans-serif" textLength="33" lengthAdjust="spacingAndGlyphs" fill="#111">PRE</text>
      </Slot>
      <Slot>
        <rect x="0" y="17" width="45" height="41" rx="2" fill="#2a2928" />
        <rect x="15" y="2" width="44" height="40" rx="2" fill="url(#tvA)" />
        <rect x="15" y="17" width="30" height="25" fill="#b6b6b6" />
      </Slot>
      <Slot>
        <path d="M30 2a28 28 0 1 1-11 54c-5 2-11 3-17 2 1-3 2-8 1-11A28 28 0 0 1 30 2z" fill="url(#chat)" />
        <rect x="14" y="18" width="23" height="24" rx="5" fill="#fff" />
        <path d="M40 26l7-5v18l-7-5z" fill="#fff" stroke="#fff" strokeWidth="1.500" strokeLinejoin="round" />
      </Slot>
      <Slot>
        <path d="M1 25A30 30 0 0 1 60 29c0 10-9 13-16 12-7 0-9-3-9-5 0-2 3-3 3-8 0-8-8-14-18-14-9 0-16 5-19 11z" fill="url(#edA)" />
        <path d="M1 25c3-7 10-11 18-11 11 0 19 7 19 14-2-4-7-6-11-5-6 2-8 9-6 17 3 11 12 19 17 19A30 30 0 0 1 1 25z" fill="url(#edB)" />
        <path d="M27 23c-10 4-15 14-10 24 4 8 13 13 21 12 8-2 14-7 18-13 1-1 0-2-1-2-15 6-27 0-29-10-.600-4 0-9 1-11z" fill="#12509e" />
      </Slot>
      <Slot>
        <path d="M0 8a4 4 0 0 1 4-4h14c3 0 6 6 9 6h29a4 4 0 0 1 4 4v8H0z" fill="#e0a200" />
        <path d="M0 15a2 2 0 0 1 2-1h18l7-4h29a4 4 0 0 1 4 4v39a4 4 0 0 1-4 4H4a4 4 0 0 1-4-4z" fill="url(#fold)" />
        <path d="M11 57V46a6 6 0 0 1 6-6h26a6 6 0 0 1 6 6v11z" fill="#1173cc" />
        <path d="M18 48.500h24" stroke="#0a4a8c" strokeWidth="2.500" />
      </Slot>
      <Slot>
        <path d="M0 20L27 2q3-2 6 0l27 18-30 20z" fill="#0f5eb4" />
        <path d="M5 19h50L30 40z" fill="#f3f3f3" />
        <path d="M60 20v34a3 3 0 0 1-3 3H30L0 38z" fill="url(#mailA)" />
        <path d="M0 20l60 36-1 1H3a3 3 0 0 1-3-3z" fill="url(#mailB)" />
      </Slot>
      <Slot>
        <path d="M4 4v52l27-26z" fill="#4285f4" />
        <path d="M4 4c1-3 4-4 7-2l31 18-11 10z" fill="#34a853" />
        <path d="M4 56c1 3 4 3 7 2l31-18-11-10z" fill="#ea4335" />
        <path d="M42 20l11 6c4 2 4 6 0 8l-11 6-11-10z" fill="#fbbc04" />
      </Slot>
      <Slot>
        <rect x="7" y="7" width="46" height="46" rx="4" fill="#444" />
        <text x="30" y="39" fontSize="26" fontFamily="Lato, sans-serif" textAnchor="middle" fill="#fff">G</text>
      </Slot>
      <Slot>
        <circle cx="30" cy="30" r="24" fill="#fff" />
        <circle cx="30" cy="30" r="22.500" fill="#0588d1" />
        <path d="M22 38L37 23" stroke="#fff" strokeWidth="5" />
        <circle cx="20.500" cy="38" r="4.500" fill="none" stroke="#fff" strokeWidth="3" />
        <path d="M41 14a8 8 0 1 0 5 8l-5 2-4-4z" fill="#fff" />
      </Slot>
      <div className="relative flex h-full w-[110px] shrink-0 items-center justify-center">
        <div className="absolute left-[7px] top-[9px] h-[97px] w-[96px] rounded-[9px] border-2 border-b-[3px] border-[#c4dde3] bg-[#e6f3f7]" />
        <svg className="relative h-[60px] w-[60px]" viewBox="0 0 60 60">
          <circle cx="30" cy="30" r="30" fill="#fff" />
          <path d="M30 30L4 15a30 30 0 0 1 52 0z" fill="#ea4335" />
          <path d="M30 30L4 15a30 30 0 0 0 26 45l14-22z" fill="#1e9043" />
          <path d="M30 15h26a30 30 0 0 1-26 45l14-22z" fill="#fcc10f" />
          <path d="M4 15l13 22.500L30 15z" fill="#ea4335" />
          <circle cx="30" cy="30" r="15" fill="#fff" />
          <circle cx="30" cy="30" r="12" fill="#2b7bee" />
        </svg>
        <div className="absolute left-[59px] top-[15px] flex size-[40px] items-center justify-center rounded-full bg-[#689f38] font-['Inter',sans-serif] text-[22px] font-semibold text-[#dcedc0]">M</div>
        <div className="absolute left-[35px] top-[96px] h-[8px] w-[40px] rounded-full bg-[#258095]" />
      </div>
      <div className="relative flex h-full w-[110px] shrink-0 items-center justify-center">
        <svg className="h-[60px] w-[60px]" viewBox="0 0 60 60">
          <path d="M31 0a29.500 29.500 0 1 1-14 55.500L0 60l4.500-16A29.500 29.500 0 0 1 31 0z" fill="#fff" />
          <path d="M31 5.500a24.500 24.500 0 1 1-12.500 45L7.500 53l3-10.500A24.500 24.500 0 0 1 31 5.500z" fill="#3dc04f" />
          <path d="M21 16c-5 2-6 8-3 13 4 8 10 13 17 15 5 1 9-2 9-7l-7-4c-2 0-3 4-5 3-5-2-8-5-10-9 0-2 3-3 2-5z" fill="#fff" />
        </svg>
        <div className="absolute left-[57px] top-[15px] flex size-[41px] items-center justify-center rounded-full bg-[#258095] font-['Open_Sans',sans-serif] text-[26px] text-white">11</div>
        <div className="absolute left-[48px] top-[96px] h-[8px] w-[15px] rounded-full bg-[#79868a]" />
      </div>
    </>
  );
}

function Taskbar() {
  return (
    <div className={`flex h-[120px] shrink-0 items-center border-t-[3px] border-[#a8b9bd] bg-[#cfe8ee] text-[29.500px] text-[#181a1b] ${UI}`}>
      <WeatherIcon />
      <div className="-mt-[4px] ml-[17px] flex w-[707px] flex-col gap-[9.500px]">
        <Fit className="w-[66px]">24°C</Fit>
        <Fit className="w-[163px] text-[#53605f]">Partly sunny</Fit>
      </div>
      <svg className="-mt-[1px] h-[58px] w-[58px] shrink-0" viewBox="0 0 58 58">
        <defs>
          <linearGradient id="win" x1="0" y1="0" x2="1" y2="1">
            <stop offset="0" stopColor="#4cd0ff" />
            <stop offset="1" stopColor="#0072d0" />
          </linearGradient>
        </defs>
        <path d="M0 3a3 3 0 0 1 3-3h25v28H0zM30 0h25a3 3 0 0 1 3 3v25H30zM0 30h28v28H3a3 3 0 0 1-3-3zM30 30h28v25a3 3 0 0 1-3 3H30z" fill="url(#win)" />
      </svg>
      <div className="-mt-[2px] ml-[38px] flex h-[77px] w-[246px] shrink-0 items-center rounded-full border-2 border-b-[3px] border-[#c3dbe1] bg-[#eff7fa]">
        <svg className="ml-[53px] h-[34px] w-[34px]" viewBox="0 0 34 34" fill="none" stroke="#181a1b" strokeWidth="3">
          <circle cx="14" cy="14" r="12" />
          <path d="M22.500 22.500l10 10" />
        </svg>
        <Fit className="ml-[13px] w-[91px]">Search</Fit>
      </div>
      <div className="-mt-[2px] ml-[9px] flex h-[117px] shrink-0">
        <Apps />
      </div>
      <div className="ml-auto flex h-full items-center">
        <svg className="-mt-[1px] h-[16px] w-[27px]" viewBox="0 0 27 16" fill="none" stroke="#181a1b" strokeWidth="3">
          <path d="M1.500 14.500l12-12 12 12" />
        </svg>
        <svg className="-mt-[3px] ml-[46px] h-[40px] w-[40px]" viewBox="0 0 40 40" fill="none" stroke="#111" strokeWidth="2.400">
          <path d="M1 20C2 7 12 1 21 1.500c7 .5 12 4 16 9.500M38 0.500v11H26M20 39C13 38 7 34 3 29M2.500 40V29h11" />
          <circle cx="30" cy="30" r="10" fill="#ff9800" stroke="none" />
        </svg>
        <div className="-mt-[2px] ml-[46px] flex w-[56px] flex-col items-center gap-[9.500px]">
          <Fit className="w-[58px]">ENG</Fit>
          <Fit className="w-[30px]">IN</Fit>
        </div>
        <svg className="-mt-[4px] ml-[47px] h-[29px] w-[40px]" viewBox="0 0 40 29" fill="none" stroke="#181a1b" strokeWidth="2.500">
          <path d="M1 11.500a26 26 0 0 1 38 0M6.500 17a19 19 0 0 1 27 0M12 22.500a11.500 11.500 0 0 1 16 0" />
          <circle cx="20" cy="25.500" r="3.200" fill="#181a1b" stroke="none" />
        </svg>
        <svg className="-mt-[3px] ml-[20px] h-[34px] w-[40px]" viewBox="0 0 40 34" fill="none" stroke="#181a1b" strokeWidth="2.400">
          <path d="M1.500 12a2 2 0 0 1 2-2h5L16 3.500v27L8.500 24h-5a2 2 0 0 1-2-2zM20.500 11.500q4 5.500 0 11M25.500 6.500q8 10.500 0 21" />
          <path d="M30.500 1.500q14 15.500 0 31" stroke="#a9bfc5" />
        </svg>
        <svg className="-mt-[3px] ml-[20px] h-[26px] w-[40px]" viewBox="0 0 40 26" fill="none" stroke="#181a1b" strokeWidth="2.600">
          <rect x="1.300" y="1.300" width="33" height="23.400" rx="5" />
          <rect x="5.500" y="5.500" width="19.500" height="15" rx="1.500" fill="#181a1b" stroke="none" />
          <path d="M37 9v8" strokeWidth="5" />
        </svg>
        <div className="-mt-[4px] ml-[40px] flex flex-col items-end gap-[10px]">
          <Fit className="w-[73px]">09:08</Fit>
          <Fit className="w-[156px]">27-12-2023</Fit>
        </div>
        <svg className="-mt-[1px] ml-[20px] mr-[53px] h-[38px] w-[34px]" viewBox="0 0 34 38" fill="#114a58">
          <path d="M17 0c8 0 12.500 5.500 12.500 12.500v8.500l4 6.500c.6 1.500 0 2.500-1.500 2.500H2c-1.500 0-2.100-1-1.500-2.500l4-6.500v-8.500C4.500 5.500 9 0 17 0zM11 32.500h12c-1 3.300-3 5-6 5s-5-1.700-6-5z" />
        </svg>
      </div>
    </div>
  );
}

export default function App() {
  return (
    <div className="flex h-[1800px] w-[3200px] flex-col overflow-hidden bg-white">
      <TabStrip />
      <AddressBar />
      <div className="h-[3px] shrink-0 bg-[#cbcccc]" />
      <FigmaToolbar />
      <div className="flex min-h-0 flex-1">
        <LayersPanel />
        <Canvas />
        <DesignPanel />
      </div>
      <Taskbar />
    </div>
  );
}
